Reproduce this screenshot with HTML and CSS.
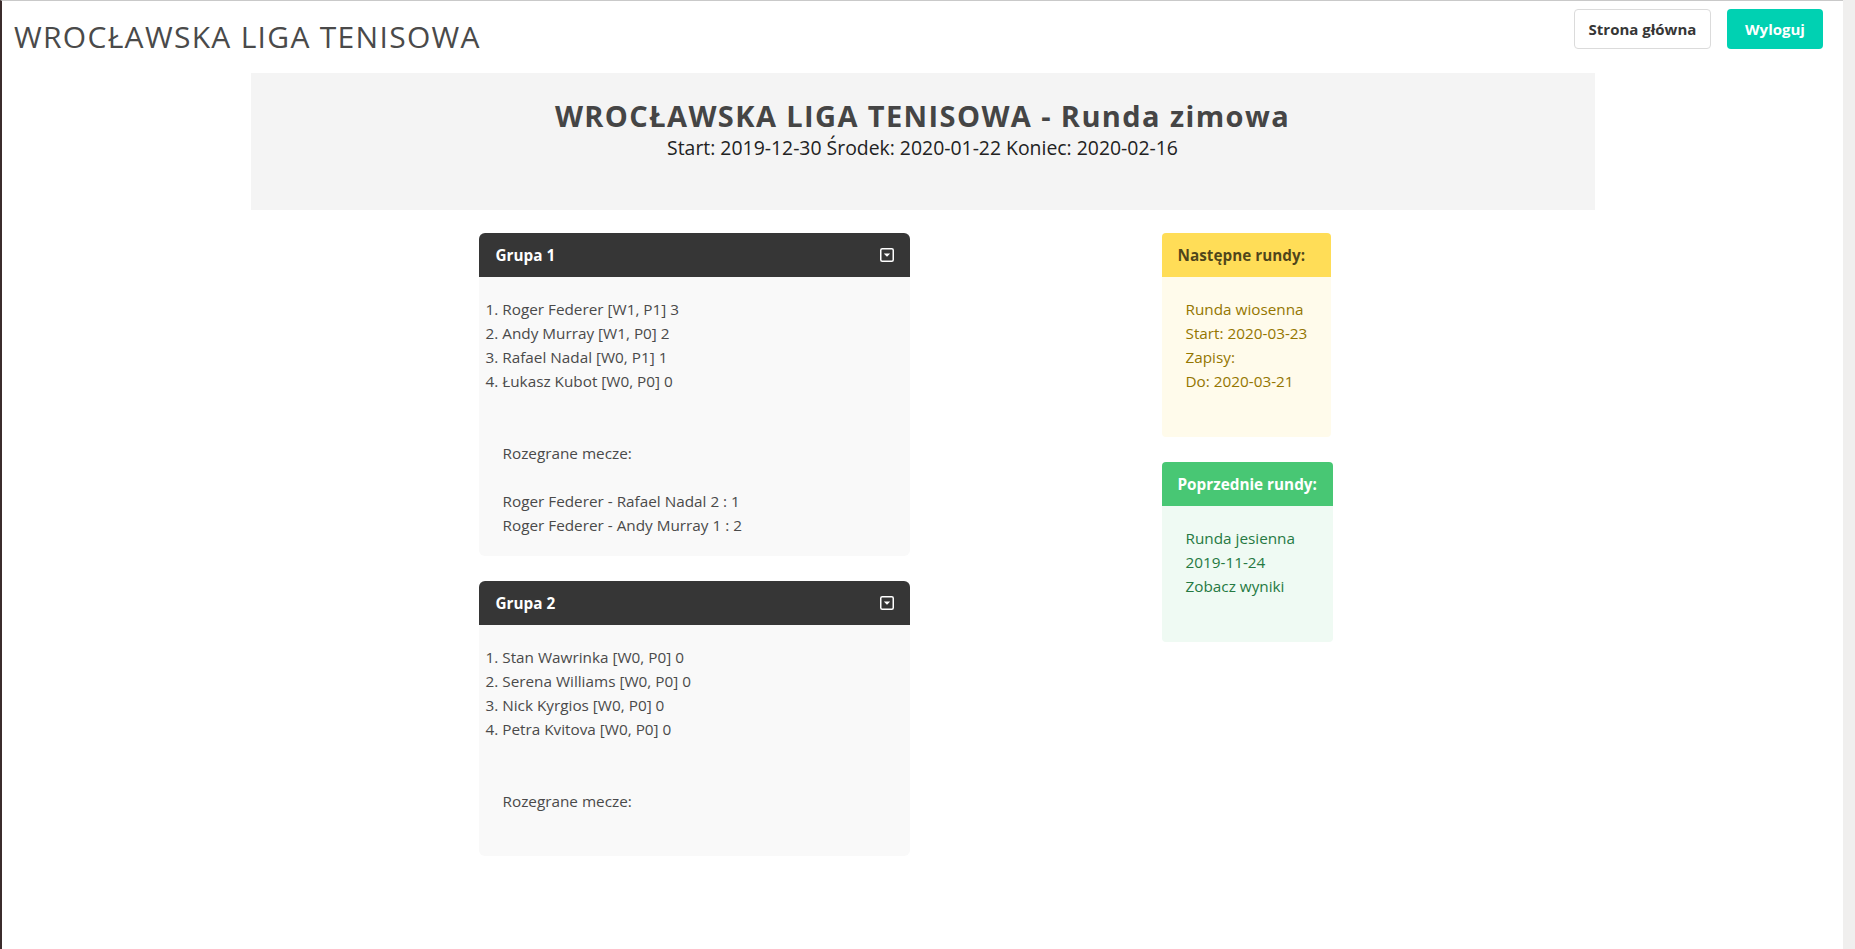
FILE: index.html
```html
<!DOCTYPE html>
<html lang="pl">
<head>
<meta charset="utf-8">
<title>Wrocławska Liga Tenisowa</title>
<link rel="stylesheet" href="styles.css">
</head>
<body>
<div class="page">
  <div class="viewport">
    <nav class="topbar">
      <h1 class="brand">WROCŁAWSKA LIGA TENISOWA</h1>
      <div class="actions">
        <a class="btn btn-light" href="#">Strona główna</a>
        <a class="btn btn-primary" href="#">Wyloguj</a>
      </div>
    </nav>

    <section class="hero">
      <h2 class="hero-title">WROCŁAWSKA LIGA TENISOWA - Runda zimowa</h2>
      <p class="hero-sub">Start: 2019-12-30 Środek: 2020-01-22 Koniec: 2020-02-16</p>
    </section>

    <div class="columns">
      <div class="col-groups">
        <article class="panel">
          <header class="panel-heading">
            <span>Grupa 1</span>
            <svg class="toggle" width="14" height="14" viewBox="0 0 14 14"><rect x="0.75" y="0.75" width="12.5" height="12.5" rx="1.5" fill="none" stroke="#fff" stroke-width="1.5"/><path d="M3.8 5.6 H10.2 L7 8.8 Z" fill="#fff"/></svg>
          </header>
          <div class="panel-body">
            <ol class="ranking">
              <li>1. Roger Federer [W1, P1] 3</li>
              <li>2. Andy Murray [W1, P0] 2</li>
              <li>3. Rafael Nadal [W0, P1] 1</li>
              <li>4. Łukasz Kubot [W0, P0] 0</li>
            </ol>
            <div class="matches">
              <p class="matches-title">Rozegrane mecze:</p>
              <ul class="match-list">
                <li>Roger Federer - Rafael Nadal 2 : 1</li>
                <li>Roger Federer - Andy Murray 1 : 2</li>
              </ul>
            </div>
          </div>
        </article>

        <article class="panel">
          <header class="panel-heading">
            <span>Grupa 2</span>
            <svg class="toggle" width="14" height="14" viewBox="0 0 14 14"><rect x="0.75" y="0.75" width="12.5" height="12.5" rx="1.5" fill="none" stroke="#fff" stroke-width="1.5"/><path d="M3.8 5.6 H10.2 L7 8.8 Z" fill="#fff"/></svg>
          </header>
          <div class="panel-body">
            <ol class="ranking">
              <li>1. Stan Wawrinka [W0, P0] 0</li>
              <li>2. Serena Williams [W0, P0] 0</li>
              <li>3. Nick Kyrgios [W0, P0] 0</li>
              <li>4. Petra Kvitova [W0, P0] 0</li>
            </ol>
            <div class="matches">
              <p class="matches-title">Rozegrane mecze:</p>
              <ul class="match-list"></ul>
            </div>
          </div>
        </article>
      </div>

      <div class="col-side">
        <article class="message message-warning">
          <header class="message-header">Następne rundy:</header>
          <div class="message-body">
            <p>Runda wiosenna</p>
            <p>Start: 2020-03-23</p>
            <p>Zapisy:</p>
            <p>Do: 2020-03-21</p>
          </div>
        </article>

        <article class="message message-success">
          <header class="message-header">Poprzednie rundy:</header>
          <div class="message-body">
            <p>Runda jesienna</p>
            <p>2019-11-24</p>
            <p><a href="#" class="results-link">Zobacz wyniki</a></p>
          </div>
        </article>
      </div>
    </div>
  </div>
  <div class="gutter"></div>
</div>
</body>
</html>
```

FILE: styles.css
```css
* { box-sizing: border-box; }

html, body {
  margin: 0;
  padding: 0;
  height: 100%;
  background: #ffffff;
}

body {
  font-family: "Open Sans", "Noto Sans", "DejaVu Sans", sans-serif;
  font-size: 15.3px;
  color: #4a4a4a;
}

.page {
  display: grid;
  grid-template-columns: 1fr 12px;
  min-height: 100vh;
}

.viewport {
  border-left: 2px solid #3b2c2c;
  border-top: 1px solid #c9c9c9;
  background: #ffffff;
}

.gutter {
  background: #f0efee;
}

/* ---------- top bar ---------- */
.topbar {
  display: flex;
  justify-content: space-between;
  align-items: flex-start;
  height: 72px;
  padding: 0 20px 0 12px;
}

.brand {
  margin: 21px 0 0;
  font-size: 30px;
  line-height: 30px;
  font-weight: 400;
  letter-spacing: 1.3px;
  color: #4a4a4a;
}

.actions {
  display: flex;
  gap: 16px;
  margin-top: 8px;
}

.btn {
  display: flex;
  align-items: center;
  justify-content: center;
  height: 40px;
  border-radius: 4px;
  font-weight: 700;
  font-size: 15px;
  text-decoration: none;
}

.btn-light {
  width: 137px;
  background: #ffffff;
  border: 1px solid #dbdbdb;
  color: #363636;
}

.btn-primary {
  width: 96px;
  background: #00d1b2;
  border: 1px solid transparent;
  color: #ffffff;
}

/* ---------- hero ---------- */
.hero {
  width: 1344px;
  margin: 0 auto;
  background: #f4f4f4;
  padding: 27px 0 50px;
  text-align: center;
}

.hero-title {
  margin: 0;
  font-size: 29px;
  line-height: 32px;
  font-weight: 700;
  letter-spacing: 1.4px;
  color: #454545;
}

.hero-sub {
  margin: 4px 0 0;
  font-size: 19.4px;
  line-height: 24px;
  color: #222222;
}

/* ---------- columns ---------- */
.columns {
  width: 1344px;
  margin: 23px auto 0;
  padding-left: 228px;
  display: flex;
  align-items: flex-start;
  gap: 252px;
}

.col-groups {
  width: 431px;
  display: flex;
  flex-direction: column;
  gap: 25px;
}

.col-side {
  display: flex;
  flex-direction: column;
  align-items: flex-start;
  gap: 25px;
}

/* ---------- panel ---------- */
.panel {
  border-radius: 6px;
  overflow: hidden;
  background: #f9f9f9;
}

.panel-heading {
  display: flex;
  justify-content: space-between;
  align-items: center;
  background: #363636;
  color: #ffffff;
  font-weight: 700;
  line-height: 20px;
  padding: 12px 16px 12px 17px;
}

.toggle { display: block; }

.panel-body {
  padding: 20px 7px 19px;
  line-height: 24px;
}

.ranking,
.match-list {
  list-style: none;
  margin: 0;
  padding: 0;
}

.matches {
  padding: 48px 0 0 17px;
}

.matches-title {
  margin: 0 0 24px;
}

/* ---------- messages ---------- */
.message {
  width: fit-content;
  border-radius: 4px;
  overflow: hidden;
}

.message-header {
  font-weight: 700;
  line-height: 20px;
  padding: 12px 16px;
}

.message-body {
  padding: 20px 24px 44px;
  line-height: 24px;
}

.message-body p { margin: 0; }

.message-warning .message-header {
  background: #ffdd57;
  color: rgba(0, 0, 0, 0.7);
}

.message-warning .message-body {
  background: #fffbeb;
  color: #947600;
}

.message-success .message-header {
  background: #48c774;
  color: #ffffff;
}

.message-success .message-body {
  background: #effaf3;
  color: #257942;
}

.results-link {
  color: inherit;
  text-decoration: none;
}
```
